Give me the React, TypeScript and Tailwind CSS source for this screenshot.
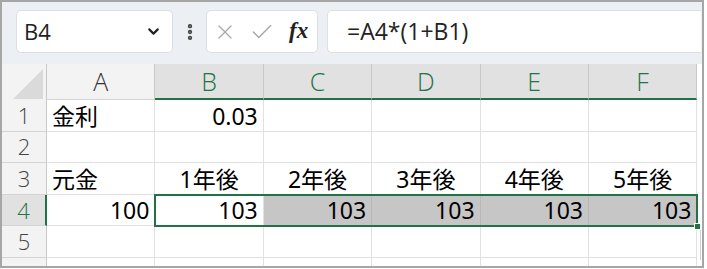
import { ChevronDown, EllipsisVertical, X, Check } from "lucide-react"

const COLS = ["A", "B", "C", "D", "E", "F"]
const cellFont = { fontFamily: '"Noto Sans", "Noto Sans CJK JP", sans-serif' }
const uiFont = { fontFamily: '"Open Sans", sans-serif' }

type Cell = { text?: string; align?: "left" | "right" | "center"; fill?: boolean }

const rows: Cell[][] = [
  [{ text: "金利", align: "left" }, { text: "0.03", align: "right" }, {}, {}, {}, {}],
  [{}, {}, {}, {}, {}, {}],
  [
    { text: "元金", align: "left" },
    { text: "1年後", align: "center" },
    { text: "2年後", align: "center" },
    { text: "3年後", align: "center" },
    { text: "4年後", align: "center" },
    { text: "5年後", align: "center" },
  ],
  [
    { text: "100", align: "right" },
    { text: "103", align: "right" },
    { text: "103", align: "right", fill: true },
    { text: "103", align: "right", fill: true },
    { text: "103", align: "right", fill: true },
    { text: "103", align: "right", fill: true },
  ],
  [{}, {}, {}, {}, {}, {}],
  [{}, {}, {}, {}, {}, {}],
]

const justify = { left: "justify-start", right: "justify-end", center: "justify-center" }

function Toolbar() {
  return (
    <div className="flex h-[62px] shrink-0 items-start bg-[#eceff3] pl-[14px] pr-[1px] pt-[8px]">
      <div className="flex h-[43px] w-[157px] items-center justify-between rounded-[5px] border border-[#dcdfe3] bg-white pl-[7px] pr-[10px]">
        <span className="text-[22px] text-[#222]" style={uiFont}>
          B4
        </span>
        <ChevronDown size={17} strokeWidth={3} className="text-[#222]" />
      </div>
      <div className="flex h-[43px] w-[33px] items-center justify-center">
        <EllipsisVertical size={20} strokeWidth={3.2} className="text-[#444]" />
      </div>
      <div className="flex h-[43px] w-[112px] items-center rounded-[5px] border border-[#dcdfe3] bg-white pl-[6px]">
        <X size={24} strokeWidth={1.3} className="text-[#a8a8a8]" />
        <Check size={26} strokeWidth={1.3} className="ml-[12px] text-[#a8a8a8]" />
        <span
          className="ml-[14px] text-[23px] font-bold italic text-[#222]"
          style={{ fontFamily: '"Liberation Serif", serif' }}
        >
          fx
        </span>
      </div>
      <div className="ml-[9px] flex h-[43px] flex-1 items-center rounded-l-[5px] border border-r-0 border-[#dcdfe3] bg-white pl-[19px]">
        <span className="text-[23px] text-[#222]" style={uiFont}>
          =A4*(1+B1)
        </span>
      </div>
    </div>
  )
}

function HeaderRow() {
  return (
    <div className="flex h-[36px] shrink-0">
      <div className="relative w-[45px] shrink-0 border-r border-[#c8c8c8] bg-[#f3f3f3]">
        <svg width="30" height="30" viewBox="0 0 30 30" className="absolute bottom-[1px] right-[3px]">
          <polygon points="30,0 30,30 0,30" fill="#dadada" />
        </svg>
      </div>
      {COLS.map((c) => {
        const sel = c !== "A"
        return (
          <div
            key={c}
            className={
              sel
                ? "flex w-[108.4px] shrink-0 items-center justify-center border-r border-b-2 border-r-[#c8c8c8] border-b-[#217346] bg-[#e1e1e1] text-[#217346]"
                : "flex w-[108.4px] shrink-0 items-center justify-center border-r border-b border-r-[#c8c8c8] border-b-[#d4d4d4] bg-[#f3f3f3] text-[#333]"
            }
          >
            <span className="text-[25px] font-light leading-none" style={uiFont}>
              {c}
            </span>
          </div>
        )
      })}
    </div>
  )
}

export default function App() {
  return (
    <div className="h-[269px] w-[707px] bg-white">
      <div className="flex h-[268px] w-[704px] flex-col overflow-hidden border-2 border-[#a6a6a6] bg-white">
        <Toolbar />
        <HeaderRow />
        <div className="relative shrink-0">
          {rows.map((r, i) => {
            const sel = i === 3
            return (
              <div key={i} className="flex h-[31.6px] shrink-0">
                <div
                  className={
                    sel
                      ? "flex w-[45px] shrink-0 items-center justify-center border-b border-r-2 border-b-[#d4d4d4] border-r-[#217346] bg-[#e1e1e1] text-[#217346]"
                      : "flex w-[45px] shrink-0 items-center justify-center border-b border-r border-b-[#d4d4d4] border-r-[#c8c8c8] bg-[#f3f3f3] text-[#444]"
                  }
                >
                  <span className="text-[22px] font-light" style={uiFont}>
                    {i + 1}
                  </span>
                </div>
                {r.map((cell, j) => (
                  <div
                    key={j}
                    className={`flex w-[108.4px] shrink-0 items-end border-r border-b border-[#e1e1e1] px-[5px] pb-[3px] ${
                      justify[cell.align ?? "left"]
                    } ${cell.fill ? "bg-[#c6c6c6] border-r-[#b8b8b8]" : "bg-white"}`}
                  >
                    <span className="text-[23px] leading-none text-black" style={cellFont}>
                      {cell.text}
                    </span>
                  </div>
                ))}
              </div>
            )
          })}
          {/* selection B4:F4 */}
          <div className="pointer-events-none absolute left-[152px] top-[93.8px] h-[33px] w-[544px] border-2 border-[#217346]" />
          <div className="absolute left-[692px] top-[123px] h-[7px] w-[7px] border border-white bg-[#217346]" />
          <div className="absolute left-[698px] top-[130px] h-[30px] w-[2px] border-l border-[#d0d0d0]" />
        </div>
      </div>
    </div>
  )
}
